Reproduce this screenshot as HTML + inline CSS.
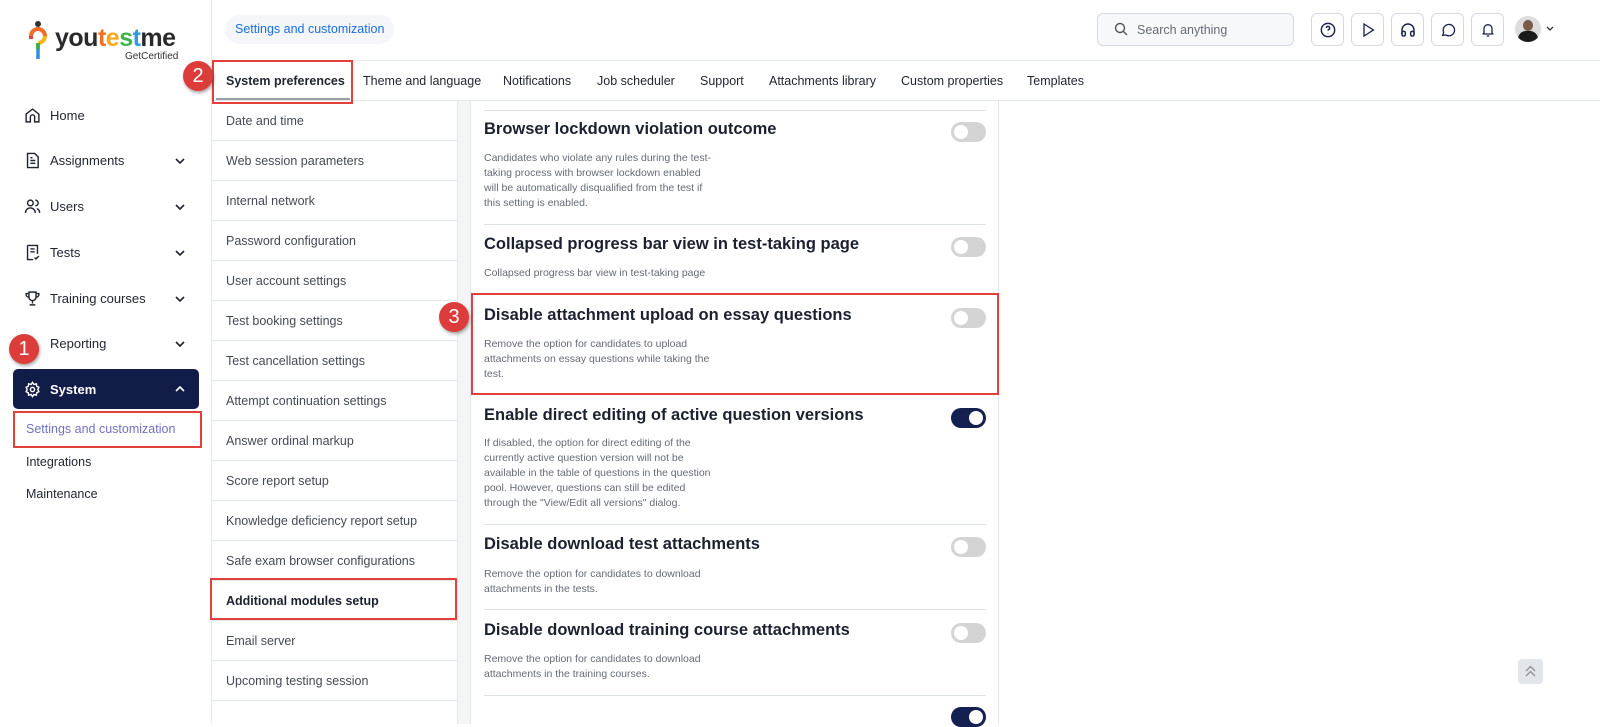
<!DOCTYPE html>
<html><head><meta charset="utf-8"><style>
*{box-sizing:border-box;margin:0;padding:0}
body{width:1600px;height:724px;overflow:hidden;background:#fff;font-family:"Liberation Sans",sans-serif;color:#1f2430;position:relative}
.a{position:absolute}
.side{left:0;top:0;width:212px;height:724px;border-right:1px solid #e3e6eb;background:#fff}
.nav{position:absolute;left:24px;font-size:13px;color:#1f2430;display:flex;align-items:center}
.nav svg{margin-right:9px}
.chev{position:absolute;left:174px}
.sub{position:absolute;left:26px;font-size:12.5px;color:#1f2430}
.tabs{left:212px;top:60px;width:1388px;height:41px;border-top:1px solid #e8ebef;border-bottom:1px solid #e3e6eb}
.tab{position:absolute;top:13px;font-size:12.5px;color:#1f2430}
.list{left:212px;top:101px;width:245px}
.li{height:40px;border-bottom:1px solid #e3e6eb;font-size:12.5px;color:#444a55;padding-left:14px;line-height:40px}
.strip{left:457px;top:101px;width:14px;height:623px;background:#f4f5f7;border-left:1px solid #e3e6eb;border-right:1px solid #e3e6eb}
.card{left:471px;top:101px;width:528px;height:623px;border-right:1px solid #e3e6eb}
.hr{position:absolute;left:13px;width:502px;height:1px;background:#dfe2e7}
.tt{position:absolute;left:13px;font-size:16.5px;font-weight:bold;color:#1c2130}
.ds{position:absolute;left:13px;width:232px;font-size:10.5px;line-height:15px;color:#656b76}
.tg{position:absolute;left:480px;width:35px;height:20px;border-radius:10px;background:#d4d4d4}
.tg:after{content:"";position:absolute;left:3px;top:3px;width:14px;height:14px;border-radius:50%;background:#fff}
.tg.on{background:#132050}.tg.on:after{left:18px}
.red{position:absolute;border:2px solid #e2403a}
.badge{position:absolute;width:30px;height:30px;border-radius:50%;background:#dc3d3b;color:#fff;font-size:20px;text-align:center;line-height:30px;box-shadow:1px 2px 3px rgba(0,0,0,.35)}
.ib{position:absolute;top:13px;width:33px;height:33px;border:1px solid #d5d9e0;border-radius:6px;display:flex;align-items:center;justify-content:center}
</style></head><body>
<div class="a side">
 <svg class="a" style="left:28px;top:20px" width="20" height="42" viewBox="0 0 20 42"><circle cx="10" cy="4" r="3" fill="#333"/><path d="M3 16a7 7 0 0 1 14 0" stroke="#f26b2a" stroke-width="4" fill="none"/><path d="M17 16a7 7 0 0 1-7 7" stroke="#f6b51c" stroke-width="4" fill="none"/><path d="M10 23v6" stroke="#3cb44a" stroke-width="4"/><path d="M10 29v10" stroke="#2f8ee0" stroke-width="3.5"/><path d="M3 16v3" stroke="#e8403c" stroke-width="4"/></svg>
 <div class="a" style="left:55px;top:24px;font-size:25px;font-weight:bold;letter-spacing:-0.5px;color:#2a2a2a">you<span style="color:#f37021">t</span><span style="color:#f6a81c">e</span><span style="color:#3bb54a">s</span><span style="color:#2d9be0">t</span>me</div>
 <div class="a" style="left:125px;top:51px;font-size:10px;color:#333">GetCertified</div>
 <div class="nav" style="top:107px"><svg width="17" height="17" viewBox="0 0 24 24" fill="none" stroke="#1f2430" stroke-width="2"><path d="M3 10l9-7 9 7v11h-6v-7a3 3 0 0 0-6 0v7H3z"/></svg>Home</div>
 <div class="nav" style="top:152px"><svg width="17" height="17" viewBox="0 0 24 24" fill="none" stroke="#1f2430" stroke-width="2"><path d="M5 2h10l5 5v15H5z"/><path d="M9 12h7M9 16h7M9 8h3"/></svg>Assignments</div>
 <div class="nav" style="top:198px"><svg width="17" height="17" viewBox="0 0 24 24" fill="none" stroke="#1f2430" stroke-width="2"><circle cx="9" cy="7" r="4"/><path d="M2 21a7 7 0 0 1 14 0M16 3a4 4 0 0 1 0 8M22 21a6 6 0 0 0-4-6"/></svg>Users</div>
 <div class="nav" style="top:244px"><svg width="17" height="17" viewBox="0 0 24 24" fill="none" stroke="#1f2430" stroke-width="2"><path d="M5 2h14v12M5 2v20h8"/><path d="M9 7h6M9 11h6M15 19l2 2 4-4"/></svg>Tests</div>
 <div class="nav" style="top:290px"><svg width="17" height="17" viewBox="0 0 24 24" fill="none" stroke="#1f2430" stroke-width="2"><path d="M7 3h10v7a5 5 0 0 1-10 0zM7 5H3a4 4 0 0 0 4 5M17 5h4a4 4 0 0 1-4 5M12 15v4M8 21h8"/></svg>Training courses</div>
 <div class="nav" style="top:336px"><span style="width:17px;display:inline-block;margin-right:9px"></span>Reporting</div>
 <svg class="chev" style="top:155px" width="12" height="12" viewBox="0 0 12 12"><path d="M2 4l4 4 4-4" stroke="#1f2430" stroke-width="1.6" fill="none"/></svg>
 <svg class="chev" style="top:201px" width="12" height="12" viewBox="0 0 12 12"><path d="M2 4l4 4 4-4" stroke="#1f2430" stroke-width="1.6" fill="none"/></svg>
 <svg class="chev" style="top:247px" width="12" height="12" viewBox="0 0 12 12"><path d="M2 4l4 4 4-4" stroke="#1f2430" stroke-width="1.6" fill="none"/></svg>
 <svg class="chev" style="top:293px" width="12" height="12" viewBox="0 0 12 12"><path d="M2 4l4 4 4-4" stroke="#1f2430" stroke-width="1.6" fill="none"/></svg>
 <svg class="chev" style="top:338px" width="12" height="12" viewBox="0 0 12 12"><path d="M2 4l4 4 4-4" stroke="#1f2430" stroke-width="1.6" fill="none"/></svg>
 <div class="a" style="left:13px;top:369px;width:186px;height:40px;background:#111c48;border-radius:5px"></div>
 <div class="nav" style="top:381px;color:#fff;font-weight:bold"><svg width="17" height="17" viewBox="0 0 24 24" fill="none" stroke="#fff" stroke-width="2"><circle cx="12" cy="12" r="3"/><path d="M12 2l2 3 3.5-1 .5 3.5L21 9l-1.5 3 1.5 3-3 1.5-.5 3.5-3.5-1-2 3-2-3-3.5 1-.5-3.5L3 15l1.5-3L3 9l3-1.5.5-3.5 3.5 1z"/></svg>System</div>
 <svg class="chev" style="top:383px" width="12" height="12" viewBox="0 0 12 12"><path d="M2 8l4-4 4 4" stroke="#fff" stroke-width="1.6" fill="none"/></svg>
 <div class="red" style="left:13px;top:411px;width:189px;height:37px"></div>
 <div class="sub" style="top:422px;color:#6f72c0">Settings and customization</div>
 <div class="sub" style="top:455px">Integrations</div>
 <div class="sub" style="top:487px">Maintenance</div>
 <div class="badge" style="left:9px;top:334px">1</div>
</div>
<div class="a" style="left:225px;top:15px;height:29px;padding:0 10px;line-height:29px;border-radius:15px;background:#f4f6f9;color:#1a6fe0;font-size:12.5px">Settings and customization</div>
<div class="a" style="left:1097px;top:13px;width:197px;height:33px;border:1px solid #d5d9e0;border-radius:6px;background:#f7f8fa"></div>
<svg class="a" style="left:1114px;top:22px" width="14" height="14" viewBox="0 0 14 14" fill="none" stroke="#555" stroke-width="1.4"><circle cx="6" cy="6" r="4.5"/><path d="M9.5 9.5l3.5 3.5"/></svg>
<div class="a" style="left:1137px;top:23px;font-size:12.5px;color:#666b75">Search anything</div>
<div class="ib" style="left:1311px"><svg width="16" height="16" viewBox="0 0 24 24" fill="none" stroke="#1c2550" stroke-width="2.2"><circle cx="12" cy="12" r="10"/><path d="M9.5 9a2.5 2.5 0 1 1 3.5 2.3c-.7.4-1 1-1 1.7M12 17v.5"/></svg></div>
<div class="ib" style="left:1351px"><svg width="16" height="16" viewBox="0 0 24 24" fill="none" stroke="#1c2550" stroke-width="2"><path d="M6 3l14 9-14 9z"/></svg></div>
<div class="ib" style="left:1391px"><svg width="16" height="16" viewBox="0 0 24 24" fill="none" stroke="#1c2550" stroke-width="2.2"><path d="M3 18v-6a9 9 0 0 1 18 0v6"/><rect x="3" y="14" width="5" height="7" rx="2"/><rect x="16" y="14" width="5" height="7" rx="2"/></svg></div>
<div class="ib" style="left:1431px"><svg width="16" height="16" viewBox="0 0 24 24" fill="none" stroke="#1c2550" stroke-width="2"><path d="M4 20l1.5-4.5A8.5 8.5 0 1 1 9 19.5z"/></svg></div>
<div class="ib" style="left:1471px"><svg width="16" height="16" viewBox="0 0 24 24" fill="none" stroke="#1c2550" stroke-width="2"><path d="M6 17V10a6 6 0 0 1 12 0v7l2 1H4zM10 21h4"/></svg></div>
<div class="a" style="left:1515px;top:16px;width:26px;height:26px;border-radius:50%;background:#ddd;overflow:hidden"><div class="a" style="left:8px;top:4px;width:10px;height:11px;border-radius:50%;background:#7a5a45"></div><div class="a" style="left:3px;top:15px;width:20px;height:14px;border-radius:8px 8px 0 0;background:#1a1a1a"></div></div>
<svg class="a" style="left:1546px;top:26px" width="8" height="6" viewBox="0 0 8 6"><path d="M1 1l3 3 3-3" stroke="#333" stroke-width="1.3" fill="none"/></svg>

<div class="a tabs">
 <div class="tab" style="left:14px;font-weight:bold">System preferences</div>
 <div class="a" style="left:4px;top:37px;width:134px;height:2px;background:#9aa0aa"></div>
 <div class="tab" style="left:151px">Theme and language</div>
 <div class="tab" style="left:291px">Notifications</div>
 <div class="tab" style="left:385px">Job scheduler</div>
 <div class="tab" style="left:488px">Support</div>
 <div class="tab" style="left:557px">Attachments library</div>
 <div class="tab" style="left:689px">Custom properties</div>
 <div class="tab" style="left:815px">Templates</div>
</div>
<div class="red" style="left:212px;top:60px;width:141px;height:44px"></div>
<div class="badge" style="left:183px;top:61px">2</div>

<div class="a list">
 <div class="li">Date and time</div><div class="li">Web session parameters</div><div class="li">Internal network</div><div class="li">Password configuration</div><div class="li">User account settings</div><div class="li">Test booking settings</div><div class="li">Test cancellation settings</div><div class="li">Attempt continuation settings</div><div class="li">Answer ordinal markup</div><div class="li">Score report setup</div><div class="li">Knowledge deficiency report setup</div><div class="li">Safe exam browser configurations</div><div class="li" style="color:#1c2130;font-weight:bold">Additional modules setup</div><div class="li">Email server</div><div class="li">Upcoming testing session</div>
</div>
<div class="red" style="left:210px;top:578px;width:247px;height:42px"></div>
<div class="a strip"></div>
<div class="a card">
 <div class="hr" style="top:9px"></div>
 <div class="tt" style="top:19px">Browser lockdown violation outcome</div><div class="tg" style="top:21px"></div>
 <div class="ds" style="top:50px">Candidates who violate any rules during the test-taking process with browser lockdown enabled will be automatically disqualified from the test if this setting is enabled.</div>
 <div class="hr" style="top:123px"></div>
 <div class="tt" style="top:134px">Collapsed progress bar view in test-taking page</div><div class="tg" style="top:136px"></div>
 <div class="ds" style="top:165px;width:300px">Collapsed progress bar view in test-taking page</div>
 <div class="tt" style="top:205px">Disable attachment upload on essay questions</div><div class="tg" style="top:207px"></div>
 <div class="ds" style="top:236px">Remove the option for candidates to upload attachments on essay questions while taking the test.</div>
 <div class="tt" style="top:305px">Enable direct editing of active question versions</div><div class="tg on" style="top:307px"></div>
 <div class="ds" style="top:335px">If disabled, the option for direct editing of the currently active question version will not be available in the table of questions in the question pool. However, questions can still be edited through the "View/Edit all versions" dialog.</div>
 <div class="hr" style="top:423px"></div>
 <div class="tt" style="top:434px">Disable download test attachments</div><div class="tg" style="top:436px"></div>
 <div class="ds" style="top:466px">Remove the option for candidates to download attachments in the tests.</div>
 <div class="hr" style="top:508px"></div>
 <div class="tt" style="top:520px">Disable download training course attachments</div><div class="tg" style="top:522px"></div>
 <div class="ds" style="top:551px">Remove the option for candidates to download attachments in the training courses.</div>
 <div class="hr" style="top:594px"></div>
 <div class="tg on" style="top:606px"></div>
</div>
<div class="red" style="left:471px;top:293px;width:528px;height:102px"></div>
<div class="badge" style="left:439px;top:302px">3</div>
<div class="a" style="left:1518px;top:659px;width:25px;height:25px;border-radius:4px;background:#e2e5e9"></div>
<svg class="a" style="left:1524px;top:664px" width="13" height="15" viewBox="0 0 13 15" fill="none" stroke="#8a9098" stroke-width="1.3"><path d="M2 7l4.5-4.5L11 7M2 12l4.5-4.5L11 12"/></svg>
</body></html>
